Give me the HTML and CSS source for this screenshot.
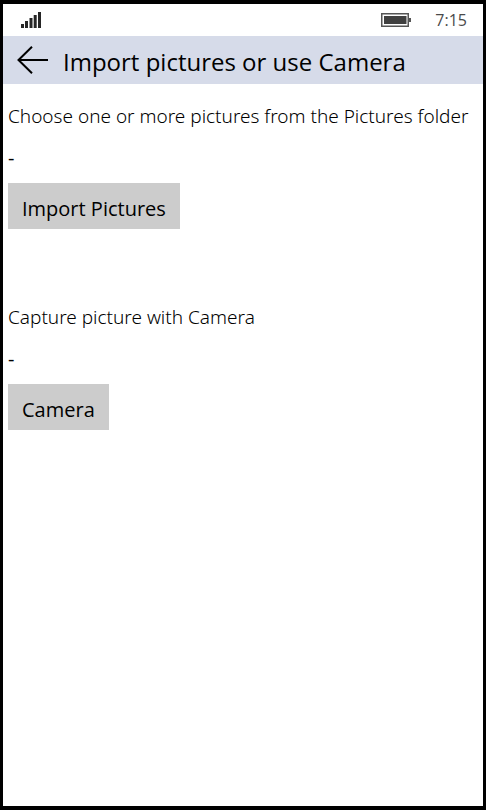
FILE: index.html
```html
<!DOCTYPE html>
<html lang="en">
<head>
<meta charset="utf-8">
<meta name="viewport" content="width=device-width, initial-scale=1">
<title>Import pictures or use Camera</title>
<link rel="stylesheet" href="styles.css">
</head>
<body>
<div class="phone">
  <div class="status">
    <svg class="signal" width="20" height="16" viewBox="0 0 20 16" role="img" aria-label="Signal strength">
      <path d="M0 12h3v4H0zM4 9h3v7H4zM8.500 6h3v10h-3zM12.700 3h3v13h-3zM17 0h3v16h-3z" fill="#262626"/>
    </svg>
    <svg class="battery" width="30" height="14" viewBox="0 0 30 14" role="img" aria-label="Battery full">
      <path d="M.75.75h26.500v12.500H.75z" fill="none" stroke="#555" stroke-width="1.500"/>
      <path d="M3 3h22.500v8H3z" fill="#404040"/>
      <path d="M28 5h2v4h-2z" fill="#555"/>
    </svg>
    <time class="clock">7:15</time>
  </div>
  <header class="header">
    <button class="back" type="button" aria-label="Back">
      <svg width="32" height="28" viewBox="0 0 32 28" fill="none" stroke="#000" stroke-width="2" aria-hidden="true">
        <path d="M31 14H1.500M15 .7L1.500 14L15 27.300"/>
      </svg>
    </button>
    <h1 class="title">Import pictures or use Camera</h1>
  </header>
  <main class="content">
    <section class="group">
      <p class="label">Choose one or more pictures from the Pictures folder</p>
      <p class="value">-</p>
      <button class="action" type="button">Import Pictures</button>
    </section>
    <section class="group">
      <p class="label">Capture picture with Camera</p>
      <p class="value">-</p>
      <button class="action" type="button">Camera</button>
    </section>
  </main>
</div>
</body>
</html>
```
FILE: styles.css
```css
* {
  box-sizing: border-box;
}

body {
  margin: 0;
  font-family: "Open Sans", "Noto Sans", sans-serif;
  color: #000;
}

.phone {
  min-height: 100vh;
  border: solid #000;
  border-width: 4px 3px;
  background: #fff;
}

.status {
  display: flex;
  align-items: center;
  height: 32px;
  padding: 0 16px 0 18px;
}

.battery {
  margin-left: auto;
}

.clock {
  margin-left: 24px;
  font-size: 16px;
  line-height: 20px;
  color: #4a4a4a;
}

.header {
  display: flex;
  align-items: center;
  gap: 14px;
  height: 48px;
  padding: 0 14px;
  background: #d6dbe9;
}

.back {
  display: flex;
  padding: 0;
  border: 0;
  background: none;
}

.title {
  margin: 0;
  padding-top: 4px;
  font-size: 24px;
  font-weight: 400;
  line-height: 36px;
  white-space: nowrap;
}

.content {
  padding: 17px 5px;
}

.group {
  margin-bottom: 72px;
}

.label,
.value {
  margin: 0 0 12px;
  font-size: 20px;
  line-height: 30px;
}

.label {
  font-family: "Noto Sans", "Open Sans", sans-serif;
  font-size: 19px;
  font-weight: 300;
  white-space: nowrap;
}

.value {
  margin-bottom: 10px;
}

.action {
  display: block;
  height: 46px;
  margin-bottom: 73px;
  padding: 5px 14px 0;
  border: 0;
  background: #ccc;
  color: #000;
  font-family: inherit;
  font-size: 20px;
  line-height: 30px;
}
```
